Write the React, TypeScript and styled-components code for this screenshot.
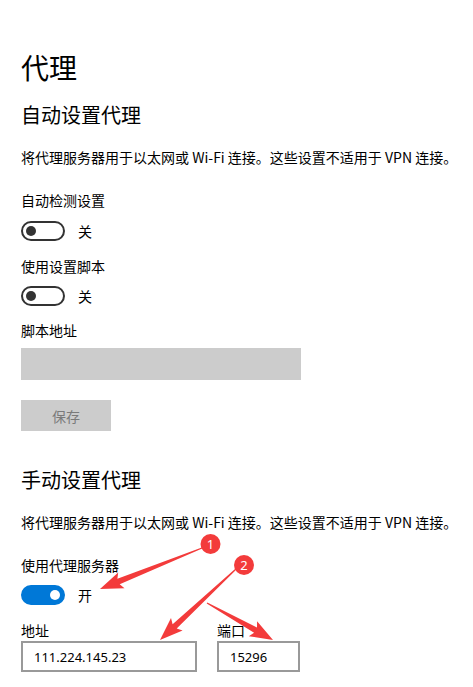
import React from "react";
import styled, { createGlobalStyle } from "styled-components";

const Global = createGlobalStyle`
  html, body { margin: 0; padding: 0; background: #fff; }
  body { font-family: "Noto Sans", "Noto Sans CJK SC", sans-serif; color: #000; }
`;

const Page = styled.div`
  position: relative;
  width: 473px;
  height: 687px;
  overflow: hidden;
  padding-left: 21px;
  box-sizing: border-box;
  display: flex;
  flex-direction: column;
  align-items: flex-start;
`;

const Title = styled.h1`
  margin: 47px 0 0;
  font-size: 28px;
  line-height: 40px;
  font-weight: 400;
  font-family: "Noto Sans CJK SC", sans-serif;
`;

const Section = styled.h2<{ $mt: number }>`
  margin: ${(p) => p.$mt}px 0 0;
  font-size: 20px;
  line-height: 28px;
  font-weight: 400;
  font-family: "Noto Sans CJK SC", sans-serif;
`;

const Text = styled.div<{ $mt: number }>`
  margin-top: ${(p) => p.$mt}px;
  font-size: 14px;
  line-height: 20px;
  white-space: nowrap;
  font-family: "Noto Sans CJK SC", sans-serif;
`;

const ToggleRow = styled.div<{ $mt: number }>`
  margin-top: ${(p) => p.$mt}px;
  display: flex;
  align-items: center;
  gap: 13px;
  height: 20px;
  font-size: 14px;
  font-family: "Noto Sans CJK SC", sans-serif;
`;

const Switch = styled.div<{ $on?: boolean }>`
  width: 44px;
  height: 20px;
  box-sizing: border-box;
  border-radius: 10px;
  border: 2px solid ${(p) => (p.$on ? "#0078d7" : "#333")};
  background: ${(p) => (p.$on ? "#0078d7" : "#fff")};
  display: flex;
  align-items: center;
  justify-content: ${(p) => (p.$on ? "flex-end" : "flex-start")};
  padding: 0 3px;
`;

const Knob = styled.div<{ $on?: boolean }>`
  width: 10px;
  height: 10px;
  border-radius: 50%;
  background: ${(p) => (p.$on ? "#fff" : "#333")};
`;

const DisabledInput = styled.div`
  margin-top: 8px;
  width: 280px;
  height: 32px;
  background: #ccc;
`;

const DisabledButton = styled.div`
  margin-top: 20px;
  width: 90px;
  height: 31px;
  background: #ccc;
  color: #7a7a7a;
  font-size: 14px;
  font-family: "Noto Sans CJK SC", sans-serif;
  display: flex;
  align-items: center;
  justify-content: center;
`;

const Fields = styled.div`
  margin-top: 15px;
  display: flex;
  gap: 20px;
`;

const Field = styled.div`
  display: flex;
  flex-direction: column;
`;

const FieldLabel = styled.div`
  font-size: 14px;
  line-height: 20px;
  font-family: "Noto Sans CJK SC", sans-serif;
`;

const Box = styled.div<{ $w: number }>`
  margin-top: 1px;
  width: ${(p) => p.$w}px;
  height: 31px;
  box-sizing: border-box;
  border: 2px solid #999;
  padding-left: 11px;
  display: flex;
  align-items: center;
  font-size: 13px;
  font-family: "Noto Sans", sans-serif;
`;

const Overlay = styled.svg`
  position: absolute;
  left: 0;
  top: 0;
  pointer-events: none;
`;

const RED = "#f33b3b";

function arrowPoints(x1: number, y1: number, x2: number, y2: number) {
  const dx = x2 - x1;
  const dy = y2 - y1;
  const len = Math.hypot(dx, dy);
  const ux = dx / len;
  const uy = dy / len;
  const nx = -uy;
  const ny = ux;
  const headLen = 20;
  const headW = 8.5;
  const shaftW = 3;
  const tailW = 0.6;
  const bx = x2 - ux * headLen;
  const by = y2 - uy * headLen;
  const pts = [
    [x1 + nx * tailW, y1 + ny * tailW],
    [bx + nx * shaftW, by + ny * shaftW],
    [bx + nx * headW - ux * 3, by + ny * headW - uy * 3],
    [x2, y2],
    [bx - nx * headW - ux * 3, by - ny * headW - uy * 3],
    [bx - nx * shaftW, by - ny * shaftW],
    [x1 - nx * tailW, y1 - ny * tailW],
  ];
  return pts.map((p) => p.map((v) => v.toFixed(1)).join(",")).join(" ");
}

const Annotations = () => (
  <Overlay width={473} height={687} viewBox="0 0 473 687">
    <polygon points={arrowPoints(202, 548, 100, 589)} fill={RED} />
    <polygon points={arrowPoints(236, 569, 160, 640)} fill={RED} />
    <polygon points={arrowPoints(207, 603, 273, 640)} fill={RED} />
    <circle cx={210.5} cy={544} r={10} fill={RED} />
    <text x={210.5} y={548.5} fontSize={13} fill="#fff" textAnchor="middle" fontFamily="Noto Sans, sans-serif">1</text>
    <circle cx={244} cy={565} r={10} fill={RED} />
    <text x={244} y={569.5} fontSize={13} fill="#fff" textAnchor="middle" fontFamily="Noto Sans, sans-serif">2</text>
  </Overlay>
);

const DESC = "将代理服务器用于以太网或 Wi-Fi 连接。这些设置不适用于 VPN 连接。";

export default function App() {
  return (
    <>
      <Global />
      <Page>
        <Title>代理</Title>
        <Section $mt={14}>自动设置代理</Section>
        <Text $mt={18}>{DESC}</Text>
        <Text $mt={23}>自动检测设置</Text>
        <ToggleRow $mt={11}>
          <Switch><Knob /></Switch>
          关
        </ToggleRow>
        <Text $mt={15}>使用设置脚本</Text>
        <ToggleRow $mt={10}>
          <Switch><Knob /></Switch>
          关
        </ToggleRow>
        <Text $mt={14}>脚本地址</Text>
        <DisabledInput />
        <DisabledButton>保存</DisabledButton>
        <Section $mt={35}>手动设置代理</Section>
        <Text $mt={18}>{DESC}</Text>
        <Text $mt={23}>使用代理服务器</Text>
        <ToggleRow $mt={10}>
          <Switch $on><Knob $on /></Switch>
          开
        </ToggleRow>
        <Fields>
          <Field>
            <FieldLabel>地址</FieldLabel>
            <Box $w={176}>111.224.145.23</Box>
          </Field>
          <Field>
            <FieldLabel>端口</FieldLabel>
            <Box $w={83}>15296</Box>
          </Field>
        </Fields>
        <Annotations />
      </Page>
    </>
  );
}
